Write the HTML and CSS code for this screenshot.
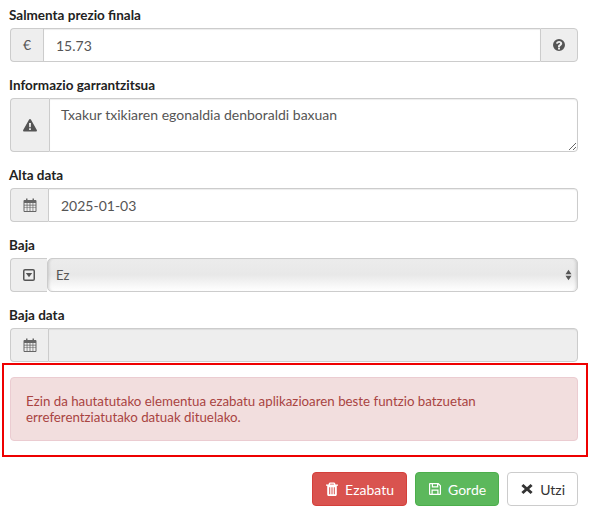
FILE: index.html
```html
<!DOCTYPE html>
<html lang="eu">
  <head>
    <meta charset="UTF-8" />
    <meta name="viewport" content="width=device-width, initial-scale=1.0" />
    <title>Salmenta</title>
    <link rel="stylesheet" href="styles.css">
  </head>
  <body>
    <form class="edit-form">
      <div class="form-group">
        <label class="form-label">Salmenta prezio finala</label>
        <div class="input-group">
          <span class="addon addon-price">€</span>
          <input class="form-control control-price" type="text" value="15.73" />
          <span class="addon addon-right">
            <svg class="icon" viewBox="0 0 14 14"><path fill-rule="evenodd" d="M7 1a6 6 0 1 0 0 12A6 6 0 0 0 7 1zM6 9.6h2v1.8H6zM3.9 5.4C4.2 3.9 5.4 3 7.1 3c1.800 0 3.100 1.100 3.100 2.600 0 1.100-.6 1.700-1.300 2.200-.6.4-.9.700-.9 1.100H6v-.4c0-1 .5-1.500 1.200-2 .6-.4.9-.6.9-1 0-.4-.4-.7-1-.7-.6 0-1 .4-1.200 1z"/></svg>
          </span>
        </div>
      </div>

      <div class="form-group">
        <label class="form-label">Informazio garrantzitsua</label>
        <div class="input-group">
          <span class="addon addon-warning">
            <svg class="icon" viewBox="0 0 14 14"><path fill-rule="evenodd" d="M7 1c.4 0 .7.200.9.500l5.900 10.500c.4.700-.1 1.500-.9 1.500H1.100c-.8 0-1.300-.8-.9-1.500L6.100 1.500C6.300 1.200 6.600 1 7 1zM6 5l.2 4.300h1.600L8 5zM6.100 10.200v1.700h1.800v-1.700z"/></svg>
          </span>
          <textarea class="form-control control-area">Txakur txikiaren egonaldia denboraldi baxuan</textarea>
        </div>
      </div>

      <div class="form-group">
        <label class="form-label">Alta data</label>
        <div class="input-group">
          <span class="addon addon-date">
            <svg class="icon icon-calendar" viewBox="0 0 14 14"><path fill-rule="evenodd" d="M3 .5h1.500v1.500h5V.5H11V2h1.500c.5 0 1 .5 1 1v10c0 .5-.5 1-1 1h-11c-.5 0-1-.5-1-1V3c0-.5.500-1 1-1H3zM1.500 5v1.800h2.200V5zm2.900 0v1.800h2.200V5zm3 0v1.800h2.200V5zm2.900 0v1.800h2.200V5zM1.500 7.500v1.900h2.200V7.500zm2.900 0v1.900h2.200V7.500zm3 0v1.900h2.200V7.500zm2.900 0v1.900h2.200V7.500zM1.500 10.100V13h2.200v-2.900zm2.900 0V13h2.200v-2.900zm3 0V13h2.200v-2.900zm2.900 0V13h2.200v-2.900z"/></svg>
          </span>
          <input class="form-control" type="text" value="2025-01-03" />
        </div>
      </div>

      <div class="form-group">
        <label class="form-label">Baja</label>
        <div class="input-group">
          <span class="addon addon-select">
            <svg class="icon" viewBox="0 0 14 14"><path fill-rule="evenodd" d="M3 1h8a2 2 0 0 1 2 2v8a2 2 0 0 1-2 2H3a2 2 0 0 1-2-2V3a2 2 0 0 1 2-2zm0 1.500a.5.500 0 0 0-.5.500v8a.5.500 0 0 0 .5.500h8a.5.500 0 0 0 .5-.5V3a.5.500 0 0 0-.5-.5zM3.800 5h6.400L7 9.200z"/></svg>
          </span>
          <div class="select-wrap">
            <select class="form-control control-select">
              <option>Ez</option>
              <option>Bai</option>
            </select>
            <svg class="select-arrows" viewBox="0 0 8 14"><path d="M4 1l3.500 5h-7zM4 13L.5 8h7z"/></svg>
          </div>
        </div>
      </div>

      <div class="form-group">
        <label class="form-label">Baja data</label>
        <div class="input-group">
          <span class="addon addon-date">
            <svg class="icon icon-calendar" viewBox="0 0 14 14"><path fill-rule="evenodd" d="M3 .5h1.500v1.500h5V.5H11V2h1.500c.5 0 1 .5 1 1v10c0 .5-.5 1-1 1h-11c-.5 0-1-.5-1-1V3c0-.5.500-1 1-1H3zM1.500 5v1.800h2.200V5zm2.900 0v1.800h2.200V5zm3 0v1.800h2.200V5zm2.900 0v1.800h2.200V5zM1.500 7.500v1.900h2.200V7.500zm2.900 0v1.900h2.200V7.500zm3 0v1.900h2.200V7.500zm2.900 0v1.900h2.200V7.500zM1.500 10.100V13h2.200v-2.900zm2.900 0V13h2.200v-2.900zm3 0V13h2.200v-2.900zm2.900 0V13h2.200v-2.900z"/></svg>
          </span>
          <input class="form-control" type="text" disabled />
        </div>
      </div>

      <div class="alert-frame">
        <div class="alert-danger">
          Ezin da hautatutako elementua ezabatu aplikazioaren beste funtzio batzuetan erreferentziatutako datuak dituelako.
        </div>
      </div>

      <div class="form-actions">
        <button type="button" class="btn btn-danger">
          <svg class="btn-icon" viewBox="0 0 14 14"><path fill-rule="evenodd" d="M5 .5h4c.5 0 .9.3 1.100.8L10.500 2.500H13v1.300h-1.200v8.700c0 .8-.6 1.500-1.300 1.500h-7c-.7 0-1.300-.7-1.300-1.500V3.800H1V2.500h2.500l.4-1.200C4.100.8 4.500.5 5 .5zM5 2.500h4l-.3-.8H5.300zM4.200 5.200v7h1v-7zm2.300 0v7h1v-7zm2.300 0v7h1v-7z"/></svg>
          Ezabatu
        </button>
        <button type="button" class="btn btn-success">
          <svg class="btn-icon" viewBox="0 0 14 14"><path fill-rule="evenodd" d="M2 1h8.500L13 3.500V12a1 1 0 0 1-1 1H2a1 1 0 0 1-1-1V2a1 1 0 0 1 1-1zm.2 1.200v9.600H3.500V7.500h7v4.300h1.300V4L10.300 2.400v3.100H3.800V2.200zM5 2.200v2.100h4V2.200zM4.700 8.700v3.100h4.600V8.700z"/></svg>
          Gorde
        </button>
        <button type="button" class="btn btn-default">
          <svg class="btn-icon" viewBox="0 0 14 14"><path d="M3.400 2L7 5.300 10.600 2 12.600 4 9.200 7l3.400 3-2 2L7 8.700 3.400 12l-2-2 3.400-3-3.400-3z"/></svg>
          Utzi
        </button>
      </div>
    </form>
  </body>
</html>
```

FILE: styles.css
```css
* {
  box-sizing: border-box;
}
body {
  margin: 0;
  background-color: #ffffff;
  font-family: Lato, "Open Sans", sans-serif;
  font-size: 14px;
  line-height: 20px;
  color: #555555;
}
.edit-form {
  padding: 5px 14px 0 10px;
}
.form-group {
  margin-bottom: 13px;
}
.form-label {
  display: block;
  margin-bottom: 3px;
  margin-left: -1px;
  font-size: 13.5px;
  font-weight: 700;
  color: #222222;
}
.input-group {
  display: flex;
}

/* add-ons */
.addon {
  display: flex;
  flex-shrink: 0;
  align-items: center;
  justify-content: center;
  background-color: #eeeeee;
  border: 1px solid #cccccc;
  border-right: 0;
  border-radius: 4px 0 0 4px;
  color: #555555;
}
.addon-price {
  width: 33px;
}
.addon-right {
  width: 38px;
  border-right: 1px solid #cccccc;
  border-left: 1px solid #cccccc;
  border-radius: 0 4px 4px 0;
}
.addon-warning {
  width: 39px;
}
.addon-date {
  width: 38px;
}
.addon-select {
  width: 37px;
}
.icon {
  width: 14px;
  height: 14px;
  fill: #555555;
}
.icon-calendar {
  fill: #666666;
}

/* controls */
.form-control {
  flex: 1;
  min-width: 0;
  width: 100%;
  height: 34px;
  padding: 6px 12px;
  background-color: #ffffff;
  border: 1px solid #cccccc;
  border-radius: 0 4px 4px 0;
  box-shadow: inset 0 1px 1px rgba(0, 0, 0, 0.075);
  font-family: inherit;
  font-size: 14px;
  line-height: 20px;
  color: #555555;
}
.control-price {
  border-radius: 0;
  border-right: 0;
}
.control-area {
  display: block;
  height: 54px;
  padding: 6px 11px;
}
.form-control:disabled {
  background-color: #eeeeee;
}
.select-wrap {
  position: relative;
  flex: 1;
  min-width: 0;
}
.control-select {
  display: block;
  padding: 6px 8px;
  appearance: none;
  border-radius: 5px;
  background: linear-gradient(to bottom, #ececec 0%, #e8e8e8 50%, #fafafa 88%, #ffffff 100%);
  box-shadow: inset 3px 0 3px -2px rgba(0, 0, 0, 0.15), inset -3px 0 3px -2px rgba(0, 0, 0, 0.15);
  font-size: 13px;
}
.select-arrows {
  position: absolute;
  top: 11px;
  right: 6px;
  width: 7px;
  height: 12px;
  fill: #555555;
}

/* alert box */
.alert-frame {
  margin: -12px -10px 0 -8px;
  padding: 12px 8px 14px 6px;
  border: 2px solid #ee0000;
}
.alert-danger {
  padding: 15px;
  background-color: #f2dede;
  border: 1px solid #ebccd1;
  border-radius: 4px;
  font-size: 13.3px;
  line-height: 16px;
  color: #a94442;
}

/* buttons */
.form-actions {
  display: flex;
  justify-content: flex-end;
  gap: 8px;
  margin-top: 15px;
}
.btn {
  display: flex;
  align-items: center;
  gap: 6px;
  height: 34px;
  padding: 6px 12px;
  border: 1px solid transparent;
  border-radius: 4px;
  font-family: inherit;
  font-size: 14px;
  font-weight: 400;
}
.btn-icon {
  width: 14px;
  height: 14px;
  fill: currentColor;
}
.btn-danger {
  background-color: #d9534f;
  border-color: #d43f3a;
  color: #ffffff;
}
.btn-success {
  background-color: #5cb85c;
  border-color: #4cae4c;
  color: #ffffff;
}
.btn-default {
  background-color: #ffffff;
  border-color: #cccccc;
  color: #333333;
}
```
